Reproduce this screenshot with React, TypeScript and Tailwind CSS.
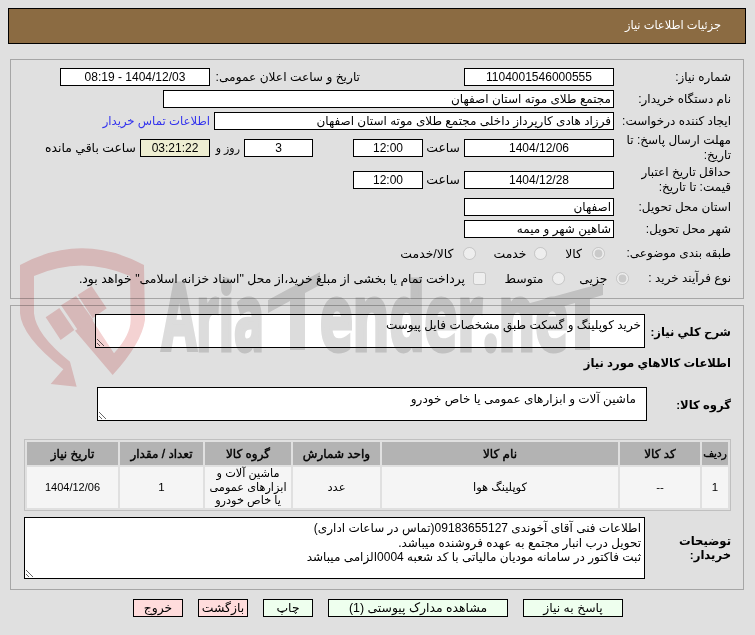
const fontStack = { fontFamily: '"Liberation Sans", "DejaVu Sans", sans-serif' };

function Field({ className = "", bg = "bg-white", children }: { className?: string; bg?: string; children?: React.ReactNode }) {
  return (
    <div className={`h-[18px] shrink-0 border border-black text-center text-[12px] leading-[16px] whitespace-nowrap overflow-hidden ${bg} ${className}`}>
      {children}
    </div>
  );
}

function Label({ children }: { children: React.ReactNode }) {
  return <div className="w-[117px] shrink-0 pl-[6px] text-[12px] leading-[15px]">{children}</div>;
}

function Radio({ checked = false }: { checked?: boolean }) {
  return <input type="radio" disabled checked={checked} readOnly className="m-0 h-[13px] w-[13px] shrink-0" />;
}

function Area({ className = "", value }: { className?: string; value: string }) {
  return (
    <textarea
      readOnly
      dir="rtl"
      value={value}
      className={`block shrink-0 border border-black bg-white text-black text-[12px] leading-[14.5px] outline-none ${className}`}
      style={fontStack}
    />
  );
}

function Watermark() {
  const letters = { fill: "#dcdcdc", stroke: "#dcdcdc", strokeWidth: 5, fontSize: 92, fontWeight: 700, direction: "ltr" as const };
  return (
    <svg className="absolute left-0 top-0 pointer-events-none mix-blend-multiply" width="755" height="635" viewBox="0 0 755 635">
      <g transform="translate(10 240) scale(0.3333)" fill="#f4d2d2">
        <path d="M30 75 Q215 -25 402 75 L405 240 Q395 310 308 405 L195 272 L245 238 L312 340 Q362 285 362 240 L360 108 Q215 45 72 108 L72 220 Q78 285 180 365 L200 440 L122 432 L160 388 Q35 290 30 220 Z" />
        <path d="M107 232 L148 204 L193 270 L152 300 Z" />
        <path d="M153 196 L198 168 L250 240 L205 272 Z" />
        <path d="M203 165 L245 138 L290 205 L248 235 Z" />
      </g>
      <text x="162" y="350" textLength="102" lengthAdjust="spacingAndGlyphs" {...letters} style={{ fontFamily: '"Open Sans", sans-serif' }}>
        Aria
      </text>
      <text x="320" y="350" textLength="248" lengthAdjust="spacingAndGlyphs" {...letters} style={{ fontFamily: '"Open Sans", sans-serif' }}>
        ender.ne
      </text>
      <path d="M523 305 L603 283 L603 295 L590 299 L590 350 L575 350 L575 303 L523 318 Z" fill="#dcdcdc" />
      <path d="M268 300 L320 272 L320 285 L305 293 L305 350 L290 350 L290 301 L268 313 Z" fill="#dcdcdc" />
    </svg>
  );
}

const headers = ["ردیف", "کد کالا", "نام کالا", "واحد شمارش", "گروه کالا", "تعداد / مقدار", "تاریخ نیاز"];

export default function App() {
  return (
    <div dir="rtl" className="relative h-[635px] w-[755px] overflow-hidden bg-[#e0e0e0] pt-[8px] text-[12.4px] text-black" style={fontStack}>
      <div className="ml-[8px] mr-[9px] flex h-[36px] items-center border border-black bg-[#8b6b42] pr-[24px] text-[11.4px] text-white">
        جزئیات اطلاعات نیاز
      </div>

      {/* first panel */}
      <div className="ml-[10px] mr-[11px] mt-[15px] h-[240px] border border-[#a6a6a6] pt-[8px] pr-[12px]">
        <div className="flex h-[18px] items-center">
          <Label>شماره نیاز:</Label>
          <Field className="w-[150px]">1104001546000555</Field>
          <div className="mr-[104px] w-[150px] whitespace-nowrap text-[12.2px]">تاریخ و ساعت اعلان عمومی:</div>
          <Field className="w-[150px]">1404/12/03 - 08:19</Field>
        </div>
        <div className="mt-[4px] flex h-[18px] items-center">
          <Label>نام دستگاه خریدار:</Label>
          <Field className="w-[451px] pr-[2px] text-right">مجتمع طلای موته استان اصفهان</Field>
        </div>
        <div className="mt-[4px] flex h-[18px] items-center">
          <Label>ایجاد کننده درخواست:</Label>
          <Field className="w-[400px] pr-[2px] text-right">فرزاد هادی کارپرداز داخلی مجتمع طلای موته استان اصفهان</Field>
          <div className="mr-[4px] text-[11.7px] text-[#3333ee]">اطلاعات تماس خریدار</div>
        </div>
        <div className="mt-[3px] flex h-[30px] items-center">
          <Label>مهلت ارسال پاسخ: تا تاریخ:</Label>
          <Field className="w-[150px]">1404/12/06</Field>
          <div className="mr-[4px] w-[37px]">ساعت</div>
          <Field className="w-[70px]">12:00</Field>
          <Field className="mr-[40px] w-[69px]">3</Field>
          <div className="mr-[4px] w-[30px] text-[11px]">روز و</div>
          <Field className="w-[70px]" bg="bg-[#eeeed2]">03:21:22</Field>
          <div className="mr-[4px] whitespace-nowrap">ساعت باقي مانده</div>
        </div>
        <div className="mt-[2px] flex h-[30px] items-center">
          <Label>حداقل تاریخ اعتبار قیمت: تا تاریخ:</Label>
          <Field className="w-[150px]">1404/12/28</Field>
          <div className="mr-[4px] w-[37px]">ساعت</div>
          <Field className="w-[70px]">12:00</Field>
        </div>
        <div className="mt-[3px] flex h-[18px] items-center">
          <Label>استان محل تحویل:</Label>
          <Field className="w-[150px] pr-[2px] text-right">اصفهان</Field>
        </div>
        <div className="mt-[4px] flex h-[18px] items-center">
          <Label>شهر محل تحویل:</Label>
          <Field className="w-[150px] pr-[2px] text-right">شاهین شهر و میمه</Field>
        </div>
        <div className="mt-[6px] flex h-[18px] items-center">
          <Label>طبقه بندی موضوعی:</Label>
          <div className="mr-[9px] flex"><Radio checked /></div>
          <div className="mr-[10px] w-[35.5px] pt-[3px]">کالا</div>
          <Radio />
          <div className="mr-[7px] w-[51px] pt-[3px]">خدمت</div>
          <Radio />
          <div className="mr-[9px] pt-[3px]">کالا/خدمت</div>
        </div>
        <div className="mt-[7px] flex h-[18px] items-center">
          <div className="w-[102.5px] shrink-0 text-[12px]">نوع فرآیند خرید :</div>
          <Radio checked />
          <div className="mr-[8px] w-[43px] pt-[3px]">جزیی</div>
          <Radio />
          <div className="mr-[8px] w-[57.5px] pt-[3px]">متوسط</div>
          <input type="checkbox" disabled readOnly className="m-0 h-[13px] w-[13px] shrink-0" />
          <div className="mr-[8px] whitespace-nowrap pt-[3px]">پرداخت تمام یا بخشی از مبلغ خرید،از محل "اسناد خزانه اسلامی" خواهد بود.</div>
        </div>
      </div>

      {/* second panel */}
      <div className="ml-[10px] mr-[11px] mt-[6px] h-[285px] border border-[#a6a6a6] pt-[8px] pr-[12px]">
        <div className="flex h-[34px] items-center">
          <div className="w-[86px] shrink-0 whitespace-nowrap pt-[2px] text-[11.6px] font-bold">شرح کلي نیاز:</div>
          <Area className="h-[34px] w-[550px] px-[3px] pt-[3px]" value="خرید کوپلینگ و گسکت طبق مشخصات فایل پیوست" />
        </div>
        <div className="mt-[7px] h-[16px] text-[11.6px] font-bold leading-[16px]">اطلاعات کالاهاي مورد نیاز</div>
        <div className="mt-[16px] flex h-[34px] items-center">
          <div className="w-[84px] shrink-0 pt-[2px] text-[11.6px] font-bold">گروه کالا:</div>
          <Area className="h-[34px] w-[550px] pr-[10px] pl-[3px] pt-[4px]" value="ماشین آلات و ابزارهای عمومی یا خاص خودرو" />
        </div>
        <table className="mt-[18px] w-[707px] table-fixed border-separate border-spacing-[2px] border border-[#c0c0c0] text-center text-[12px]">
          <colgroup>
            <col className="w-[26px]" />
            <col className="w-[80px]" />
            <col className="w-[236px]" />
            <col className="w-[87px]" />
            <col className="w-[86px]" />
            <col className="w-[83px]" />
            <col className="w-[91px]" />
          </colgroup>
          <thead>
            <tr className="h-[23px] bg-[#b3b3b3]">
              {headers.map((h) => (
                <th key={h} className="p-0 whitespace-nowrap font-normal first:text-[10.5px] [-webkit-text-stroke:0.4px_black]">{h}</th>
              ))}
            </tr>
          </thead>
          <tbody>
            <tr className="h-[41px] bg-[#f5f5f5] text-[11.5px]">
              <td className="p-0">1</td>
              <td className="p-0">--</td>
              <td className="p-0">کوپلینگ هوا</td>
              <td className="p-0">عدد</td>
              <td className="p-0 text-[11.3px] leading-[13.5px]">ماشین آلات و ابزارهای عمومی یا خاص خودرو</td>
              <td className="p-0">1</td>
              <td className="p-0 text-[11px]">1404/12/06</td>
            </tr>
          </tbody>
        </table>
        <div className="mt-[6px] flex h-[62px] items-center">
          <div className="w-[86px] shrink-0 pl-[20px] text-[11.6px] font-bold leading-[14px]">توضیحات خریدار:</div>
          <Area
            className="h-[62px] w-[621px] px-[3px] pt-[3px]"
            value={"اطلاعات فنی آقای آخوندی 09183655127(تماس در ساعات اداری)\nتحویل درب انبار مجتمع به عهده فروشنده میباشد.\nثبت فاکتور در سامانه مودیان مالیاتی با کد شعبه 0004الزامی میباشد"}
          />
        </div>
      </div>

      {/* actions */}
      <div className="mt-[9px] flex gap-[15px] pr-[132px]">
        <button className="h-[18px] w-[100px] border border-black bg-[#eeffee] leading-[16px]">پاسخ به نیاز</button>
        <button className="h-[18px] w-[180px] border border-black bg-[#eeffee] leading-[16px]">مشاهده مدارک پیوستی (1)</button>
        <button className="h-[18px] w-[50px] border border-black bg-[#eeffee] leading-[16px]">چاپ</button>
        <button className="h-[18px] w-[50px] border border-black bg-[#ffdcdc] leading-[16px]">بازگشت</button>
        <button className="h-[18px] w-[50px] border border-black bg-[#ffdcdc] leading-[16px]">خروج</button>
      </div>

      <Watermark />
    </div>
  );
}
